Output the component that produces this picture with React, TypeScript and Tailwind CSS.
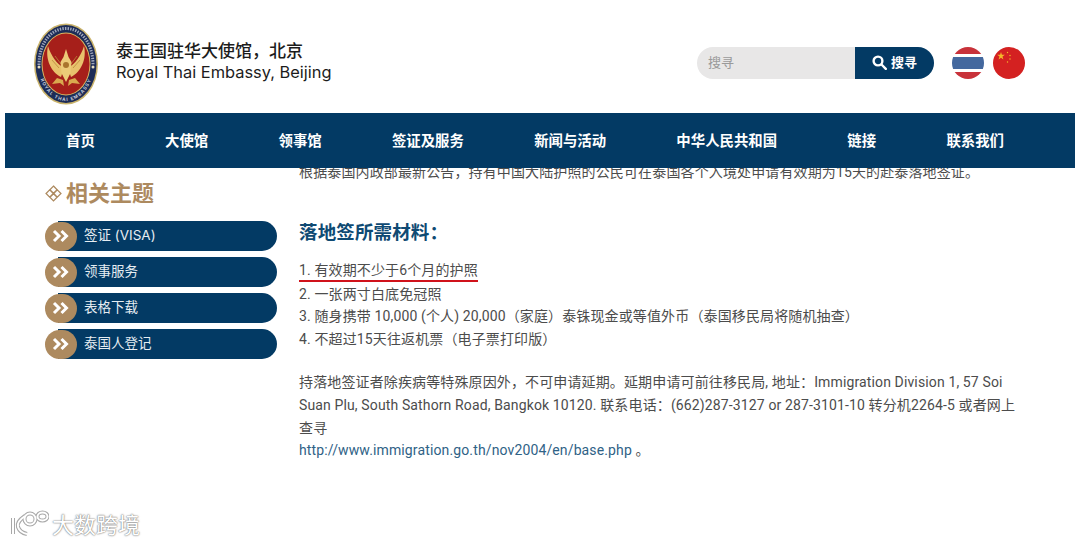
const navItems = ["首页", "大使馆", "领事馆", "签证及服务", "新闻与活动", "中华人民共和国", "链接", "联系我们"];
const sideItems = ["签证 (VISA)", "领事服务", "表格下载", "泰国人登记"];
const font = "font-['Inter','Noto_Sans_CJK_SC',sans-serif]";

function Emblem() {
  return (
    <svg width="64" height="82" viewBox="0 0 64 82" className="mt-[2px] shrink-0">
      <ellipse cx="32" cy="41" rx="32" ry="40.5" fill="#c9b26a" />
      <ellipse cx="32" cy="41" rx="30.5" ry="39" fill="#1d2c57" />
      <ellipse cx="32" cy="41" rx="24.5" ry="31.5" fill="#d8b863" />
      <ellipse cx="32" cy="41" rx="23.5" ry="30.5" fill="#a61f1a" />
      <path d="M5 42C5 20 17 5.500 32 5.500S59 20 59 42" fill="none" stroke="#c3c8d6" strokeWidth="3" strokeDasharray="1.4 1.2" opacity="0.8" />
      <path id="ringBottom" d="M4 48C8 66 19 78 32 78s24-12 28-30" fill="none" />
      <text fontSize="4.600" fontWeight="700" fill="#c9cdda" fontFamily="Inter, sans-serif" letterSpacing="1.100">
        <textPath href="#ringBottom" startOffset="50%" textAnchor="middle">ROYAL THAI EMBASSY</textPath>
      </text>
      <circle cx="5" cy="44" r="1.500" fill="#e5dcc0" />
      <circle cx="59" cy="44" r="1.500" fill="#e5dcc0" />
      <path d="M14 23C11 36 17 49 27 54l3-9C23 41 17 33 14 23zM50 23c3 13-3 26-13 31l-3-9c7-4 13-12 16-22z" fill="#e8c26c" />
      <path d="M18 37l7 8M21 33l6 8M46 37l-7 8M43 33l-6 8" stroke="#b98a3c" strokeWidth="0.800" />
      <path d="M32 26l2.500 8 3 5-1 11-4.500 9-4.500-9-1-11 3-5z" fill="#eccb78" />
      <path d="M23 55l-5 6 8-1 4 3-1-6zM41 55l5 6-8-1-4 3 1-6z" fill="#d9a94e" />
      <circle cx="32" cy="42" r="3" fill="#a9752c" />
    </svg>
  );
}

function ThaiFlag() {
  return (
    <div className="flex h-8 w-8 flex-col overflow-hidden rounded-full">
      <div className="h-[7px] bg-[#c8323a]" />
      <div className="h-[3px] bg-white" />
      <div className="h-[12px] bg-[#44689e]" />
      <div className="h-[3px] bg-white" />
      <div className="h-[7px] bg-[#c8323a]" />
    </div>
  );
}

function ChinaFlag() {
  return (
    <svg width="32" height="32" viewBox="0 0 32 32">
      <circle cx="16" cy="16" r="16" fill="#d42121" />
      <path d="M8 5l.9 2.800 3 0-2.400 1.800.9 2.800L8 10.700l-2.400 1.700.9-2.800-2.400-1.800 3 0z" fill="#f4b72a" />
      <circle cx="14.500" cy="5.500" r="0.700" fill="#f4b72a" />
      <circle cx="17" cy="8.500" r="0.700" fill="#f4b72a" />
      <circle cx="17" cy="12" r="0.700" fill="#f4b72a" />
      <circle cx="14.500" cy="15" r="0.700" fill="#f4b72a" />
    </svg>
  );
}

function SearchIcon() {
  return (
    <svg width="15" height="15" viewBox="0 0 15 15" fill="none" stroke="white" strokeWidth="2.400">
      <circle cx="6" cy="6" r="4.400" />
      <path d="M9.500 9.500l4.300 4.300" strokeLinecap="round" />
    </svg>
  );
}

function DiamondIcon() {
  return (
    <svg width="17" height="17" viewBox="0 0 16 16" fill="none" stroke="#ad8a5f" strokeWidth="1.200">
      <path d="M8 1l3.400 3.400L8 7.800 4.600 4.400zM8 8.200l3.400 3.400L8 15l-3.400-3.400zM4.400 4.600L7.800 8l-3.400 3.400L1 8zM11.600 4.600L15 8l-3.400 3.400L8.200 8z" />
    </svg>
  );
}

function Chevrons() {
  return (
    <svg width="18" height="14" viewBox="0 0 18 14" fill="none" stroke="white" strokeWidth="3">
      <path d="M2 2l5 5-5 5M9.500 2l5 5-5 5" />
    </svg>
  );
}

const logoStrokes = (
  <>
    <path d="M4 8v16" />
    <path d="M16 6c-6 4-8 8-7 11s4 6 9 7" />
    <circle cx="21" cy="9" r="5.500" />
    <ellipse cx="33.500" cy="6.500" rx="5" ry="4" />
  </>
);

function Watermark() {
  return (
    <div className="absolute left-[9px] top-[510px] flex items-center gap-[3px] text-[22px] leading-none text-white [text-shadow:0_0_2px_#777,0_0_1px_#777]">
      <svg width="40" height="26" viewBox="0 0 40 26" fill="none">
        <g stroke="#a8a8a8" strokeWidth="4">{logoStrokes}</g>
        <g stroke="white" strokeWidth="2">{logoStrokes}</g>
      </svg>
      <span className="font-['Noto_Sans_CJK_SC',sans-serif]">大数跨境</span>
    </div>
  );
}

export default function App() {
  return (
    <div className={`relative h-[544px] w-[1080px] overflow-hidden bg-white ${font}`}>
      <header className="flex h-[113px] items-center pl-[34px] pr-[55px] pt-[12px]">
        <Emblem />
        <div className="ml-[18px] -mt-[1px] text-[#1c1c1c]">
          <div className="text-[17px] font-medium leading-[21px]">泰王国驻华大使馆，北京</div>
          <div className="text-[16.400px] leading-[21px]">Royal Thai Embassy, Beijing</div>
        </div>
        <div className="ml-auto flex items-center">
          <div className="flex h-8 w-[237px] overflow-hidden rounded-full">
            <div className="flex flex-1 items-center bg-[#e8e7e7] pl-[11px] text-[13px] text-[#9a9a9a]">搜寻</div>
            <div className="flex w-[79px] items-center justify-center gap-1 bg-[#033a64] text-[13px] font-bold text-white">
              <SearchIcon />
              搜寻
            </div>
          </div>
          <div className="ml-[18px] flex gap-[9px]">
            <ThaiFlag />
            <ChinaFlag />
          </div>
        </div>
      </header>

      <nav className="relative z-10 mx-[5px] flex h-[55px] items-center bg-[#033a64] pl-[61px] pr-[71px]">
        <ul className="flex w-full items-center justify-between text-[14.400px] font-bold text-white">
          {navItems.map((item) => (
            <li key={item}>{item}</li>
          ))}
        </ul>
      </nav>

      <div className="flex pl-[45px]">
        <aside className="w-[232px] shrink-0 pt-[10px]">
          <h2 className="flex items-center gap-[4px] text-[22px] font-bold leading-[30px] text-[#ad8a5f]">
            <DiamondIcon />
            相关主题
          </h2>
          <ul className="mt-[13px] flex flex-col gap-[6px]">
            {sideItems.map((item) => (
              <li key={item} className="ml-[13px] flex h-[30px] items-center rounded-r-full rounded-l-[15px] bg-[#033a64] text-[13.500px] text-[#e6edf2]">
                <span className="-ml-[13px] flex h-[29px] w-[32px] items-center justify-center rounded-full bg-[#ad8a5f]">
                  <Chevrons />
                </span>
                <span className="-mt-[2px] ml-[7px]">{item}</span>
              </li>
            ))}
          </ul>
        </aside>

        <main className="-mt-[7px] ml-[22px] w-[719px] font-['Roboto','Noto_Sans_CJK_SC',sans-serif] text-[14px] leading-[22px] tracking-[0.13px] text-[#4c4c4c]">
          <p>根据泰国内政部最新公告，持有中国大陆护照的公民可在泰国各个入境处申请有效期为15天的赴泰落地签证。</p>
          <h3 className="mt-[37px] text-[18.500px] font-bold leading-[26px] text-[#0f4a73]">落地签所需材料：</h3>
          <ol className="mt-[15px] leading-[22.400px]">
            <li className="w-fit border-b-2 border-[#d0121b] leading-[19px]">1. 有效期不少于6个月的护照</li>
            <li className="mt-[1px]">2. 一张两寸白底免冠照</li>
            <li>3. 随身携带 10,000 (个人) 20,000（家庭）泰铢现金或等值外币（泰国移民局将随机抽查）</li>
            <li>4. 不超过15天往返机票（电子票打印版）</li>
          </ol>
          <p className="mt-[21px] leading-[22.700px]">
            持落地签证者除疾病等特殊原因外，不可申请延期。延期申请可前往移民局, 地址：Immigration Division 1, 57 Soi Suan Plu, South Sathorn Road, Bangkok 10120. 联系电话：(662)287-3127 or 287-3101-10 转分机2264-5 或者网上查寻
          </p>
          <p className="leading-[22.700px]">
            <a className="text-[#2f6286]">http://www.immigration.go.th/nov2004/en/base.php</a> 。
          </p>
        </main>
      </div>

      <Watermark />
    </div>
  );
}
